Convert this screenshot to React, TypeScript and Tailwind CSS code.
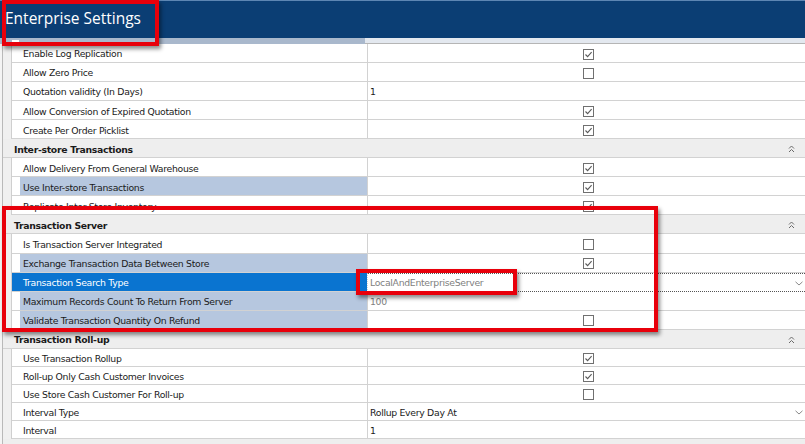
import React from "react";

type Row = {
  label: string;
  kind: "check" | "text" | "select";
  checked?: boolean;
  value?: string;
  hl?: boolean;
  selected?: boolean;
  gray?: boolean;
};
type Section = { title?: string; short?: boolean; rows: Row[] };

const sections: Section[] = [
  {
    rows: [
      { label: "Enable Log Replication", kind: "check", checked: true },
      { label: "Allow Zero Price", kind: "check", checked: false },
      { label: "Quotation validity (In Days)", kind: "text", value: "1" },
      { label: "Allow Conversion of Expired Quotation", kind: "check", checked: true },
      { label: "Create Per Order Picklist", kind: "check", checked: true },
    ],
  },
  {
    title: "Inter-store Transactions",
    rows: [
      { label: "Allow Delivery From General Warehouse", kind: "check", checked: true },
      { label: "Use Inter-store Transactions", kind: "check", checked: true, hl: true },
      { label: "Replicate Inter-Store Inventory", kind: "check", checked: true },
    ],
  },
  {
    title: "Transaction Server",
    rows: [
      { label: "Is Transaction Server Integrated", kind: "check", checked: false },
      { label: "Exchange Transaction Data Between Store", kind: "check", checked: true, hl: true },
      { label: "Transaction Search Type", kind: "select", value: "LocalAndEnterpriseServer", selected: true },
      { label: "Maximum Records Count To Return From Server", kind: "text", value: "100", hl: true, gray: true },
      { label: "Validate Transaction Quantity On Refund", kind: "check", checked: false, hl: true },
    ],
  },
  {
    title: "Transaction Roll-up",
    short: true,
    rows: [
      { label: "Use Transaction Rollup", kind: "check", checked: true },
      { label: "Roll-up Only Cash Customer Invoices", kind: "check", checked: true },
      { label: "Use Store Cash Customer For Roll-up", kind: "check", checked: false },
      { label: "Interval Type", kind: "select", value: "Rollup Every Day At" },
      { label: "Interval", kind: "text", value: "1" },
    ],
  },
  { title: "", rows: [] },
];

function CheckBox({ checked }: { checked?: boolean }) {
  return (
    <svg width="11" height="11" viewBox="0 0 11 11">
      <rect x="0.5" y="0.5" width="10" height="10" fill="#fff" stroke="#707070" />
      {checked && <path d="M2.5 5.5 L4.6 7.6 L8.6 3.2" fill="none" stroke="#5a5a5a" strokeWidth="1.1" />}
    </svg>
  );
}

function DoubleUp() {
  return (
    <svg width="7" height="8" viewBox="0 0 7 8">
      <path d="M1 3.5 L3.5 1 L6 3.5 M1 7 L3.5 4.5 L6 7" fill="none" stroke="#6a6a6a" strokeWidth="1" />
    </svg>
  );
}

function DropDown() {
  return (
    <svg width="8" height="5" viewBox="0 0 8 5">
      <path d="M0.5 0.8 L4 4 L7.5 0.8" fill="none" stroke="#8a8a8a" strokeWidth="1" />
    </svg>
  );
}

function DataRow({ r, short }: { r: Row; short?: boolean }) {
  const labelBg = r.selected ? "bg-[#0a74d0] text-white" : r.hl ? "bg-[#b6c7df] text-[#1a1a1a]" : "bg-white text-[#1a1a1a]";
  return (
    <div className={`flex box-border ${short ? "h-[18.1px]" : "h-[19.05px]"}`}>
      <div className="w-[9px] shrink-0 bg-[#f0f0f0] border-r border-[#cfcfcf]" />
      <div className={`w-[355px] shrink-0 flex border-b border-[#d2d2d2] ${r.selected ? "bg-[#0a74d0]" : "bg-white"}`}>
        <div className={`ml-[8px] flex-1 flex items-center pl-[3px] pt-[2px] ${labelBg}`}>
          <span className="whitespace-nowrap">{r.label}</span>
        </div>
      </div>
      <div
        className={`flex-1 flex items-center pt-[2px] border-l border-[#d2d2d2] relative ${
          r.selected ? "border-y border-dotted border-y-[#555] bg-white" : "border-b border-b-[#d2d2d2] bg-white"
        }`}
      >
        {r.kind === "check" && (
          <div className="flex-1 flex justify-center pl-[3px]">
            <CheckBox checked={r.checked} />
          </div>
        )}
        {r.kind === "text" && (
          <span className={`pl-[2px] ${r.gray ? "text-[#808080]" : "text-[#1a1a1a]"}`}>{r.value}</span>
        )}
        {r.kind === "select" && (
          <div className="flex-1 flex items-center justify-between pl-[2px] pr-[2px]">
            <span className={r.selected ? "text-[#808080]" : "text-[#1a1a1a]"}>{r.value}</span>
            <DropDown />
          </div>
        )}
      </div>
    </div>
  );
}

function GroupRow({ title }: { title: string }) {
  return (
    <div className="flex h-[19.05px] box-border bg-[#eeeeee] border-b border-[#d2d2d2] items-center pt-[2px]">
      <span className="pl-[11px] font-bold text-[#1a1a1a] whitespace-nowrap">{title}</span>
      <div className="flex-1" />
      <div className="w-[14px] flex justify-start mr-[3px]">
        <DoubleUp />
      </div>
    </div>
  );
}

export default function App() {
  return (
    <div
      className="relative w-[805px] h-[444px] overflow-hidden bg-white text-[9.3px] tracking-[-0.3px] leading-none"
      style={{ fontFamily: '"DejaVu Sans", Verdana, sans-serif' }}
    >
      <div className="h-[38px] bg-[#0b3e74] border-t border-[#5d86b3] flex items-center">
        <span
          className="pl-[5px] text-white text-[15.5px] tracking-normal pb-[1px]"
          style={{ fontFamily: '"Open Sans", "Noto Sans", sans-serif' }}
        >
          Enterprise Settings
        </span>
      </div>
      <div className="h-[6px] flex bg-[#e3e8ef]">
        <div className="w-[365px] bg-[#a9b8cc] relative">
          <div className="absolute left-[12px] top-[2px] w-[7px] h-[2px] bg-white" />
        </div>
        <div className="flex-1 border-b border-[#b5b5b5]" />
      </div>
      <div className="flex">
        <div className="w-[3px] shrink-0 bg-[#f4f4f4] border-r border-[#b9b9b9]" />
        <div className="flex-1 flex flex-col">
          {sections.map((s, i) => (
            <React.Fragment key={i}>
              {s.title !== undefined && <GroupRow title={s.title} />}
              {s.rows.map((r, j) => (
                <DataRow key={j} r={r} short={s.short} />
              ))}
            </React.Fragment>
          ))}
        </div>
      </div>

      <div className="absolute left-[2px] top-0 w-[157px] h-[46px] border-[4px] border-[#e8000b] shadow-[2px_3px_4px_rgba(0,0,0,0.45)]" />
      <div className="absolute left-[2px] top-[206px] w-[656px] h-[126px] border-[4px] border-[#e8000b] shadow-[2px_3px_4px_rgba(0,0,0,0.45)]" />
      <div className="absolute left-[356px] top-[269px] w-[161px] h-[26px] border-[4px] border-[#e8000b] shadow-[2px_3px_4px_rgba(0,0,0,0.45)]" />
    </div>
  );
}
